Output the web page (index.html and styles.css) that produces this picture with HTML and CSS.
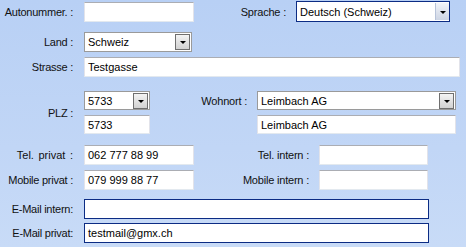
FILE: index.html
```html
<!DOCTYPE html>
<html lang="de">
<head>
  <meta charset="UTF-8">
  <title>Adresse</title>
  <link rel="stylesheet" href="styles.css">
</head>
<body>
  <div class="form">

    <div class="row row-auto">
      <span class="lbl">Autonummer. :</span>
      <div class="box text w-short"></div>
      <span class="lbl-right w-sprache">Sprache :</span>
      <div class="box combo combo-focus w-sprache-box">
        <span class="val">Deutsch (Schweiz)</span>
        <span class="btn"><i class="arrow"></i></span>
      </div>
    </div>

    <div class="row row-land">
      <span class="lbl">Land :</span>
      <div class="box combo w-land">
        <span class="val">Schweiz</span>
        <span class="btn"><i class="arrow"></i></span>
      </div>
    </div>

    <div class="row row-strasse">
      <span class="lbl">Strasse :</span>
      <div class="box text w-strasse"><span class="val">Testgasse</span></div>
    </div>

    <div class="plz-block">
      <span class="lbl plz-lbl">PLZ :</span>
      <div class="box combo">
        <span class="val">5733</span>
        <span class="btn"><i class="arrow"></i></span>
      </div>
      <span class="lbl-right">Wohnort :</span>
      <div class="box combo">
        <span class="val">Leimbach AG</span>
        <span class="btn"><i class="arrow"></i></span>
      </div>
      <div class="box text plz-text"><span class="val">5733</span></div>
      <div class="box text ort-text"><span class="val">Leimbach AG</span></div>
    </div>

    <div class="row row-tel">
      <span class="lbl lbl-wide">Tel. privat :</span>
      <div class="box text w-short"><span class="val">062 777 88 99</span></div>
      <span class="lbl-right w-intern">Tel. intern :</span>
      <div class="box text w-intern-box"></div>
    </div>

    <div class="row row-mobile">
      <span class="lbl">Mobile privat :</span>
      <div class="box text w-short"><span class="val">079 999 88 77</span></div>
      <span class="lbl-right w-intern">Mobile intern :</span>
      <div class="box text w-intern-box"></div>
    </div>

    <div class="row row-mail1">
      <span class="lbl">E-Mail intern:</span>
      <div class="box mail w-mail"></div>
    </div>

    <div class="row row-mail2">
      <span class="lbl">E-Mail privat:</span>
      <div class="box mail w-mail"><span class="val">testmail@gmx.ch</span></div>
    </div>

  </div>
</body>
</html>
```

FILE: styles.css
```css
html, body {
  margin: 0;
  padding: 0;
}

body {
  width: 466px;
  height: 247px;
  overflow: hidden;
  background: linear-gradient(180deg, #b8d0f5 0%, #c1d6f6 60%, #c8dbf7 100%);
  font-family: "Liberation Sans", Arial, sans-serif;
  font-size: 11px;
  color: #111;
}

.form {
  padding-top: 1px;
}

.row {
  display: flex;
  align-items: center;
  height: 20px;
}

.row-auto { height: 21px; }
.row-land { margin-top: 10px; }
.row-strasse { margin-top: 5px; }
.row-tel { margin-top: 11px; }
.row-mobile { margin-top: 5px; }
.row-mail1 { margin-top: 9px; }
.row-mail2 { margin-top: 4px; }

.lbl {
  width: 84px;
  flex: none;
  box-sizing: border-box;
  padding-right: 11px;
  text-align: right;
  white-space: nowrap;
  letter-spacing: -0.25px;
}

.lbl-wide {
  letter-spacing: 0;
  word-spacing: 1.5px;
}

.lbl-right {
  flex: none;
  box-sizing: border-box;
  padding-right: 10px;
  text-align: right;
  white-space: nowrap;
  letter-spacing: -0.2px;
}

.w-sprache { width: 102px; }
.w-intern { width: 125px; }

/* boxes */
.box {
  box-sizing: border-box;
  height: 20px;
  display: flex;
  align-items: center;
  background: #fff;
  flex: none;
}

.val {
  flex: 1;
  padding-left: 3px;
  white-space: nowrap;
  overflow: hidden;
  line-height: 18px;
  color: #000;
}

.text {
  border: 1px solid #e2e3ea;
  border-top-color: #abadb3;
  border-bottom-color: #e3e9ef;
}

.combo {
  border: 1px solid #9a9a9a;
}

.combo-focus {
  border-color: #0c2c84;
  height: 21px;
}

.mail {
  border: 1px solid #0c2c84;
}

.btn {
  box-sizing: border-box;
  width: 15px;
  height: 16px;
  margin-right: 1px;
  border: 1px solid #6f6f6f;
  background: linear-gradient(180deg, #f4f4f4 0%, #e2e2e2 50%, #d2d2d2 100%);
  display: flex;
  align-items: center;
  justify-content: center;
}

.combo-focus .btn {
  width: 14px;
  height: 17px;
  margin-right: 0;
  border: none;
  border-left: 1px solid #b7c3d9;
  background: linear-gradient(180deg, #f3f5f9 0%, #dfe4ee 50%, #cdd5e4 100%);
}

.arrow {
  width: 0;
  height: 0;
  border-left: 3px solid transparent;
  border-right: 3px solid transparent;
  border-top: 3px solid #000;
  margin-top: 1px;
}

/* widths */
.w-short { width: 110px; }
.w-sprache-box { width: 154px; }
.w-land { width: 108px; }
.w-strasse { width: 376px; }
.w-intern-box { width: 109px; }
.w-mail { width: 345px; }

/* PLZ / Wohnort block */
.plz-block {
  margin-top: 14px;
  display: grid;
  grid-template-columns: 84px 66px 107px 199px;
  grid-template-rows: 19px 19px;
  row-gap: 5px;
  align-items: center;
}

.plz-block .box {
  height: 19px;
}

.plz-lbl {
  grid-row: 1 / 3;
  grid-column: 1;
}

.plz-text {
  grid-row: 2;
  grid-column: 2;
}

.ort-text {
  grid-row: 2;
  grid-column: 4;
}
```
